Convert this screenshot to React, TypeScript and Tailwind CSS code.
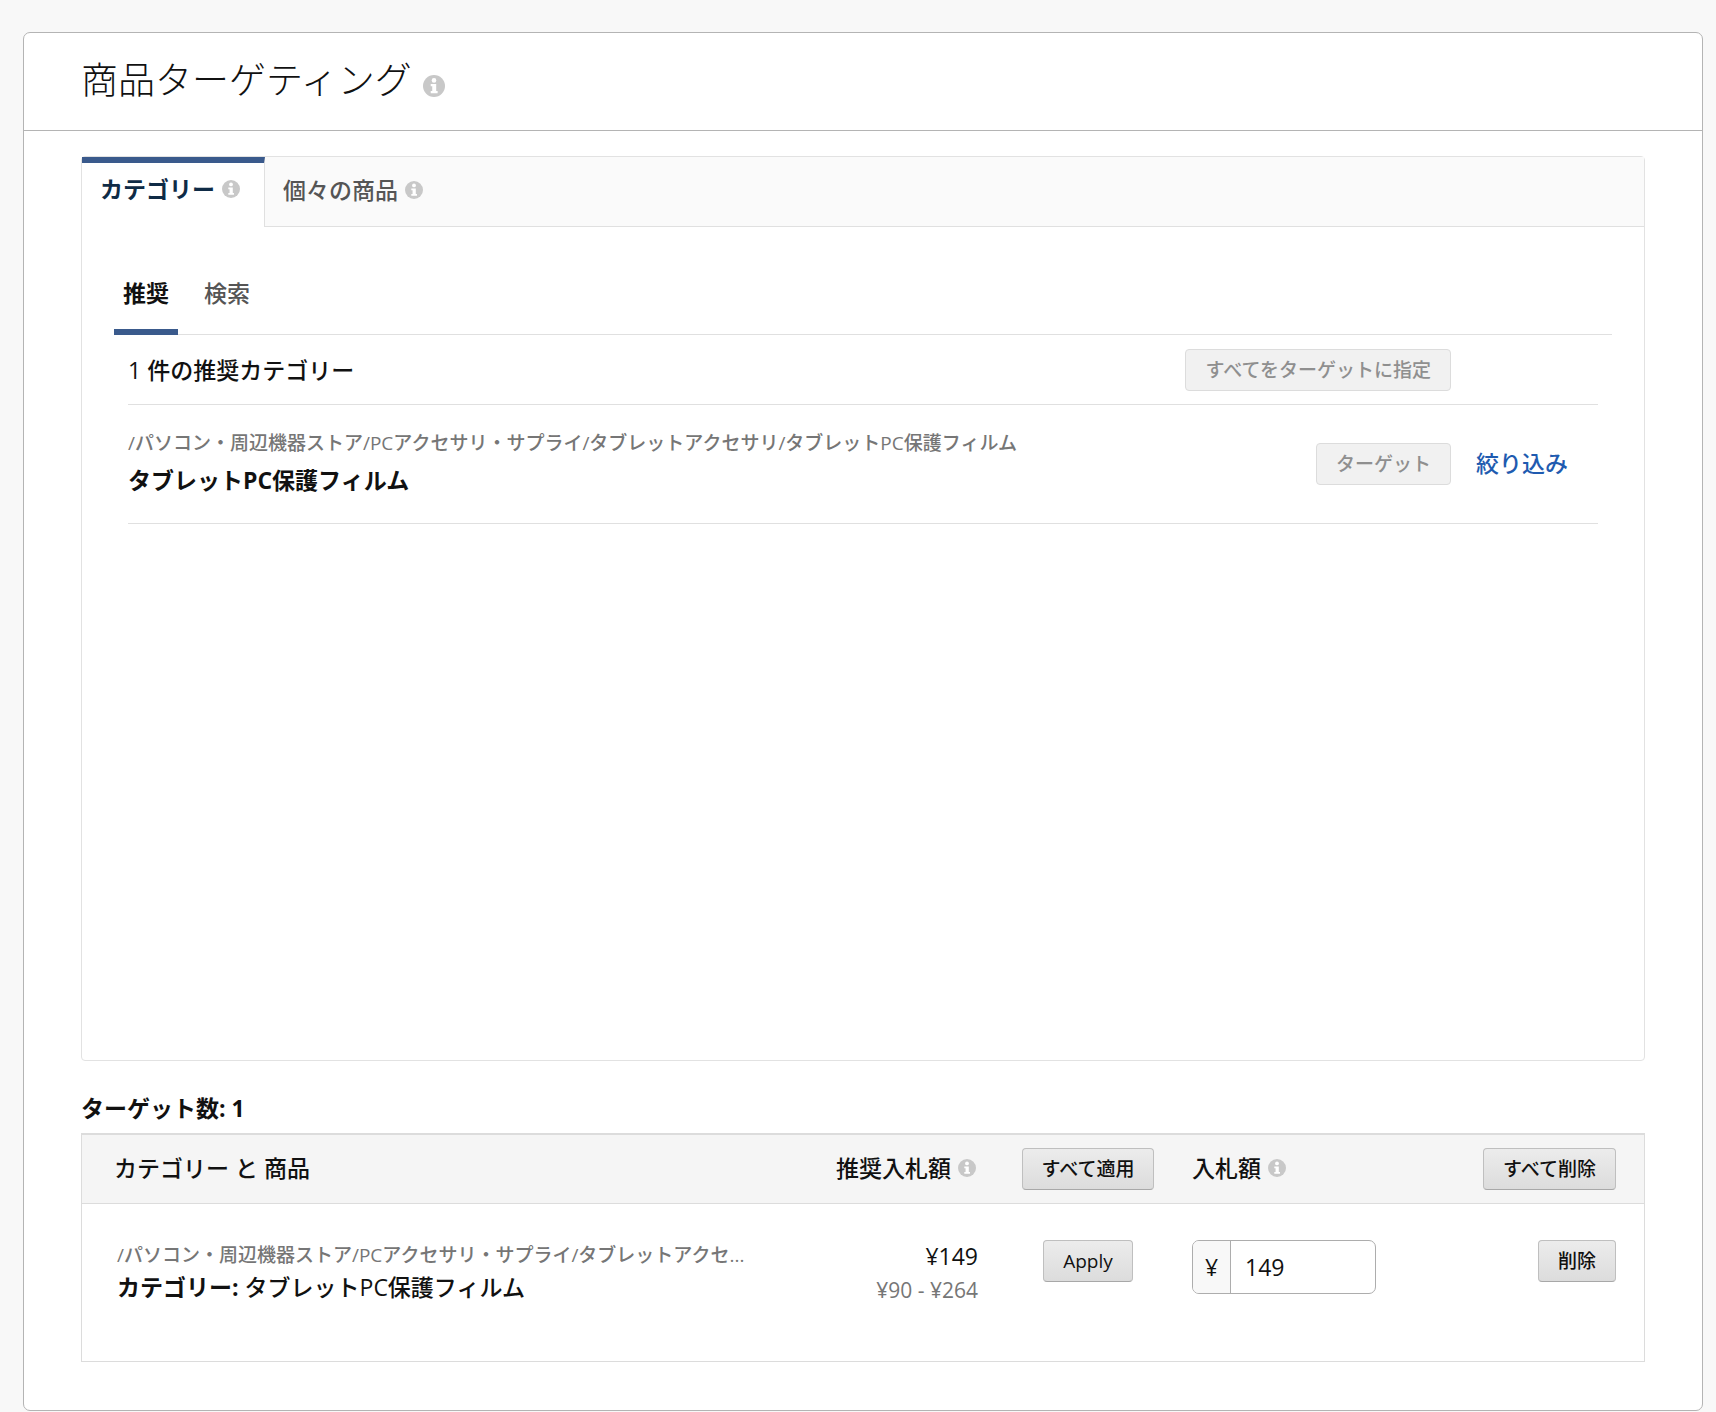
import { useState } from "react";
import type { ReactNode } from "react";
import clsx from "clsx";

/* ─── Data ─── */
const TABS = [
  { id: "category", label: "カテゴリー" },
  { id: "product", label: "個々の商品" },
];

const SUB_TABS = [
  { id: "suggested", label: "推奨" },
  { id: "search", label: "検索" },
];

const CATEGORY = {
  path: "/パソコン・周辺機器ストア/PCアクセサリ・サプライ/タブレットアクセサリ/タブレットPC保護フィルム",
  shortPath: "/パソコン・周辺機器ストア/PCアクセサリ・サプライ/タブレットアクセ...",
  name: "タブレットPC保護フィルム",
};

function InfoIcon({ className }: { className: string }) {
  return (
    <svg viewBox="0 0 20 20" className={clsx("shrink-0", className)} aria-hidden="true">
      <circle cx="10" cy="10" r="10" fill="#c8c8c8" />
      <circle cx="10" cy="4.9" r="2.1" fill="#fff" />
      <path d="M7 8.2h5v6.3h1.3v2H7v-2h1.4v-4.3H7z" fill="#fff" />
    </svg>
  );
}

function Button({ children, disabled }: { children: ReactNode; disabled?: boolean }) {
  return (
    <button
      type="button"
      disabled={disabled}
      className={clsx(
        "h-[42px] whitespace-nowrap rounded-[4px] border px-[19px] text-[19px] font-medium leading-6",
        disabled
          ? "border-[#dcdcdc] bg-[#f1f1f1] text-[#8f8f8f]"
          : "border-[#bfbfbf] border-b-[#a8a8a8] bg-linear-to-b from-[#ececec] to-[#dcdcdc] text-[#111]"
      )}
    >
      {children}
    </button>
  );
}

export default function App() {
  const [tab, setTab] = useState("category");
  const [subTab, setSubTab] = useState("suggested");
  const [bid, setBid] = useState("149");

  return (
    <div className="min-h-screen bg-[#f8f8f8] pl-[23px] pr-[13px] pt-8 font-['Open_Sans','Noto_Sans_CJK_JP',sans-serif] text-[23px] font-medium leading-[34px] text-[#111]">
      <main className="rounded-[7px] border border-[#b4b4b4] bg-white">
        {/* ── Header ── */}
        <header className="flex h-[98px] items-center gap-[11px] border-b border-[#b4b4b4] px-[57px] pb-[3px]">
          <h1 className="text-[37px] font-light leading-[48px]">商品ターゲティング</h1>
          <InfoIcon className="mt-3 size-[22px]" />
        </header>

        <div className="px-[57px] pb-12 pt-[25px]">
          {/* ── Category / product picker ── */}
          <section className="min-h-[905px] rounded-[4px] border border-[#e2e2e2]">
            <div role="tablist" className="flex h-[70px] border-b border-[#e0e0e0] bg-[#fafafa]">
              {TABS.map((t) => (
                <button
                  key={t.id}
                  type="button"
                  role="tab"
                  aria-selected={tab === t.id}
                  onClick={() => setTab(t.id)}
                  className={clsx(
                    "-mb-px flex items-center gap-[7px]",
                    tab === t.id
                      ? "border-r border-t-6 border-r-[#e0e0e0] border-t-[#3a5a8c] bg-white pb-3 pl-[18px] pr-6 font-bold text-[#0f2b46]"
                      : "px-[18px] pb-1 text-[#555]"
                  )}
                >
                  {t.label}
                  <InfoIcon className="size-[18px]" />
                </button>
              ))}
            </div>

            <div className="px-8">
              <div role="tablist" className="flex gap-[17px] border-b border-[#e0e0e0] pt-[49px]">
                {SUB_TABS.map((t) => (
                  <button
                    key={t.id}
                    type="button"
                    role="tab"
                    aria-selected={subTab === t.id}
                    onClick={() => setSubTab(t.id)}
                    className={clsx(
                      "-mb-px border-b-6 px-[9px] pb-[19px]",
                      subTab === t.id ? "border-[#3a5a8c] font-bold" : "border-transparent text-[#555]"
                    )}
                  >
                    {t.label}
                  </button>
                ))}
              </div>

              <div className="px-[14px]">
                <div className="flex h-[70px] items-center justify-between border-b border-[#e0e0e0] pr-[147px]">
                  <p>1 件の推奨カテゴリー</p>
                  <Button disabled>すべてをターゲットに指定</Button>
                </div>
                <div className="flex h-[119px] items-center justify-between border-b border-[#e0e0e0] pr-[30px]">
                  <div className="pb-1 leading-[37px]">
                    <p className="text-[19px] text-[#767676]">{CATEGORY.path}</p>
                    <p className="font-bold">{CATEGORY.name}</p>
                  </div>
                  <div className="flex items-center gap-[25px]">
                    <Button disabled>ターゲット</Button>
                    <a href="#refine" className="whitespace-nowrap pb-[2px] text-[#1f5bb0]">
                      絞り込み
                    </a>
                  </div>
                </div>
              </div>
            </div>
          </section>

          {/* ── Selected targets ── */}
          <h2 className="mb-2 mt-[30px] font-bold">ターゲット数: 1</h2>
          <div className="border border-t-2 border-[#dcdcdc]">
            <table className="w-full table-fixed text-left">
              <colgroup>
                <col />
                <col className="w-[200px]" />
                <col className="w-[180px]" />
                <col className="w-[222px]" />
                <col className="w-[244px]" />
              </colgroup>
              <thead className="bg-[#f5f5f5]">
                <tr className="h-[68px] border-b border-[#dcdcdc]">
                  <th className="pb-[2px] pl-8 font-medium">カテゴリー と 商品</th>
                  <th className="pb-[2px] pr-[22px] font-medium">
                    <span className="flex items-center justify-end gap-[7px]">
                      推奨入札額
                      <InfoIcon className="size-[18px]" />
                    </span>
                  </th>
                  <th className="text-center font-medium">
                    <Button>すべて適用</Button>
                  </th>
                  <th className="pb-[2px] pl-[14px] font-medium">
                    <span className="flex items-center gap-[7px]">
                      入札額
                      <InfoIcon className="size-[18px]" />
                    </span>
                  </th>
                  <th className="pr-7 text-right font-medium">
                    <Button>すべて削除</Button>
                  </th>
                </tr>
              </thead>
              <tbody>
                <tr className="h-[158px] align-top">
                  <td className="pl-[35px] pt-9">
                    <p className="whitespace-nowrap text-[19px] leading-[30px] text-[#767676]" title={CATEGORY.path}>
                      {CATEGORY.shortPath}
                    </p>
                    <p>
                      <b>カテゴリー:</b> {CATEGORY.name}
                    </p>
                  </td>
                  <td className="pr-5 pt-[35px] text-right">
                    <p>¥149</p>
                    <p className="text-[21px] text-[#767676]">¥90 - ¥264</p>
                  </td>
                  <td className="pt-9 text-center">
                    <Button>Apply</Button>
                  </td>
                  <td className="pl-[14px] pt-9">
                    <label className="flex h-[54px] w-[184px] overflow-hidden rounded-[7px] border border-[#adadad] bg-white">
                      <span className="flex w-[38px] items-center justify-center border-r border-[#adadad] bg-[#f8f8f8]">
                        ¥
                      </span>
                      <input
                        type="text"
                        aria-label="入札額"
                        value={bid}
                        onChange={(e) => setBid(e.target.value)}
                        className="min-w-0 flex-1 px-[14px] outline-none"
                      />
                    </label>
                  </td>
                  <td className="pr-7 pt-9 text-right">
                    <Button>削除</Button>
                  </td>
                </tr>
              </tbody>
            </table>
          </div>
        </div>
      </main>
    </div>
  );
}
